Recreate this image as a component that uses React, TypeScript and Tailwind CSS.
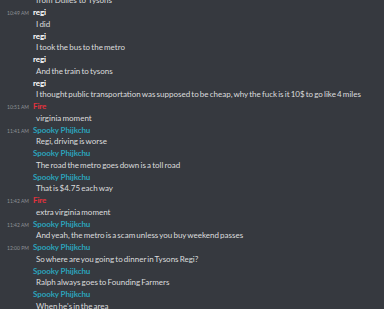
import React from "react";

type Line = { time?: string; name?: string; color?: string; text: string };

const NAME = {
  regi: "#ffffff",
  fire: "#e3323d",
  spooky: "#2ba3bb",
};

const lines: Line[] = [
  { name: "regi", color: NAME.regi, time: "10:49 AM", text: "I did" },
  { name: "regi", color: NAME.regi, text: "I took the bus to the metro" },
  { name: "regi", color: NAME.regi, text: "And the train to tysons" },
  {
    name: "regi",
    color: NAME.regi,
    text: "I thought public transportation was supposed to be cheap, why the fuck is it 10$ to go like 4 miles",
  },
  { name: "Fire", color: NAME.fire, time: "10:51 AM", text: "virginia moment" },
  { name: "Spooky Phijkchu", color: NAME.spooky, time: "11:41 AM", text: "Regi, driving is worse" },
  { name: "Spooky Phijkchu", color: NAME.spooky, text: "The road the metro goes down is a toll road" },
  { name: "Spooky Phijkchu", color: NAME.spooky, text: "That is $4.75 each way" },
  { name: "Fire", color: NAME.fire, time: "11:42 AM", text: "extra virginia moment" },
  {
    name: "Spooky Phijkchu",
    color: NAME.spooky,
    time: "11:42 AM",
    text: "And yeah, the metro is a scam unless you buy weekend passes",
  },
  {
    name: "Spooky Phijkchu",
    color: NAME.spooky,
    time: "12:00 PM",
    text: "So where are you going to dinner in Tysons Regi?",
  },
  { name: "Spooky Phijkchu", color: NAME.spooky, text: "Ralph always goes to Founding Farmers" },
  { name: "Spooky Phijkchu", color: NAME.spooky, text: "When he's in the area" },
];

function Message({ line }: { line: Line }) {
  return (
    <div className="flex flex-col">
      <div className="flex items-baseline h-[11.5px] leading-[12.5px]">
        <span className="w-[33px] shrink-0 pl-[7px] text-[5px] text-[#8e9297]">{line.time ?? ""}</span>
        <span className="text-[8px] font-bold tracking-[-0.1px]" style={{ color: line.color }}>
          {line.name}
        </span>
      </div>
      <div className="h-[12px] leading-[12px] pl-[36px] text-[8px] text-[#dcddde] whitespace-nowrap [word-spacing:-0.9px]">
        {line.text}
      </div>
    </div>
  );
}

export default function App() {
  return (
    <div
      className="w-[384px] h-[309px] overflow-hidden bg-[#36393f]"
      style={{ fontFamily: 'Lato, "Noto Sans", sans-serif' }}
    >
      <div className="-mt-[6px] flex flex-col">
        {/* tail of the previous message, cut off */}
        <div className="h-[12px] leading-[12px] pl-[36px] text-[8px] text-[#dcddde]">from Dulles to Tysons</div>
        {lines.map((l, i) => (
          <Message key={i} line={l} />
        ))}
      </div>
    </div>
  );
}
